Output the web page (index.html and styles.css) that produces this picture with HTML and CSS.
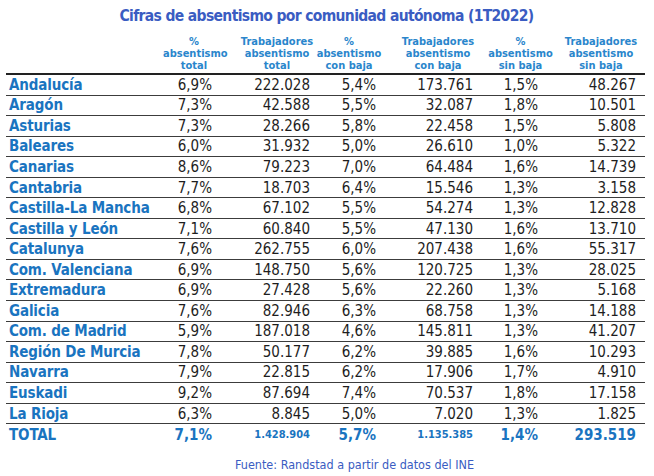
FILE: index.html
```html
<!DOCTYPE html>
<html lang="es">
<head>
<meta charset="utf-8">
<link rel="stylesheet" href="styles.css">
</head>
<body>
<div class="page">
  <h1 class="title">Cifras de absentismo por comunidad autónoma (1T2022)</h1>
  <div class="table">
    <div class="row head">
      <div class="cell lab"></div>
      <div class="cell c1">%<br>absentismo<br>total</div>
      <div class="cell c2">Trabajadores<br>absentismo<br>total</div>
      <div class="cell c3">%<br>absentismo<br>con baja</div>
      <div class="cell c4">Trabajadores<br>absentismo<br>con baja</div>
      <div class="cell c5">%<br>absentismo<br>sin baja</div>
      <div class="cell c6">Trabajadores<br>absentismo<br>sin baja</div>
    </div>
    <div class="row"><div class="cell lab">Andalucía</div><div class="cell c1">6,9%</div><div class="cell c2">222.028</div><div class="cell c3">5,4%</div><div class="cell c4">173.761</div><div class="cell c5">1,5%</div><div class="cell c6">48.267</div></div>
    <div class="row"><div class="cell lab">Aragón</div><div class="cell c1">7,3%</div><div class="cell c2">42.588</div><div class="cell c3">5,5%</div><div class="cell c4">32.087</div><div class="cell c5">1,8%</div><div class="cell c6">10.501</div></div>
    <div class="row"><div class="cell lab">Asturias</div><div class="cell c1">7,3%</div><div class="cell c2">28.266</div><div class="cell c3">5,8%</div><div class="cell c4">22.458</div><div class="cell c5">1,5%</div><div class="cell c6">5.808</div></div>
    <div class="row"><div class="cell lab">Baleares</div><div class="cell c1">6,0%</div><div class="cell c2">31.932</div><div class="cell c3">5,0%</div><div class="cell c4">26.610</div><div class="cell c5">1,0%</div><div class="cell c6">5.322</div></div>
    <div class="row"><div class="cell lab">Canarias</div><div class="cell c1">8,6%</div><div class="cell c2">79.223</div><div class="cell c3">7,0%</div><div class="cell c4">64.484</div><div class="cell c5">1,6%</div><div class="cell c6">14.739</div></div>
    <div class="row"><div class="cell lab">Cantabria</div><div class="cell c1">7,7%</div><div class="cell c2">18.703</div><div class="cell c3">6,4%</div><div class="cell c4">15.546</div><div class="cell c5">1,3%</div><div class="cell c6">3.158</div></div>
    <div class="row"><div class="cell lab">Castilla-La Mancha</div><div class="cell c1">6,8%</div><div class="cell c2">67.102</div><div class="cell c3">5,5%</div><div class="cell c4">54.274</div><div class="cell c5">1,3%</div><div class="cell c6">12.828</div></div>
    <div class="row"><div class="cell lab">Castilla y León</div><div class="cell c1">7,1%</div><div class="cell c2">60.840</div><div class="cell c3">5,5%</div><div class="cell c4">47.130</div><div class="cell c5">1,6%</div><div class="cell c6">13.710</div></div>
    <div class="row"><div class="cell lab">Catalunya</div><div class="cell c1">7,6%</div><div class="cell c2">262.755</div><div class="cell c3">6,0%</div><div class="cell c4">207.438</div><div class="cell c5">1,6%</div><div class="cell c6">55.317</div></div>
    <div class="row"><div class="cell lab">Com. Valenciana</div><div class="cell c1">6,9%</div><div class="cell c2">148.750</div><div class="cell c3">5,6%</div><div class="cell c4">120.725</div><div class="cell c5">1,3%</div><div class="cell c6">28.025</div></div>
    <div class="row"><div class="cell lab">Extremadura</div><div class="cell c1">6,9%</div><div class="cell c2">27.428</div><div class="cell c3">5,6%</div><div class="cell c4">22.260</div><div class="cell c5">1,3%</div><div class="cell c6">5.168</div></div>
    <div class="row"><div class="cell lab">Galicia</div><div class="cell c1">7,6%</div><div class="cell c2">82.946</div><div class="cell c3">6,3%</div><div class="cell c4">68.758</div><div class="cell c5">1,3%</div><div class="cell c6">14.188</div></div>
    <div class="row"><div class="cell lab">Com. de Madrid</div><div class="cell c1">5,9%</div><div class="cell c2">187.018</div><div class="cell c3">4,6%</div><div class="cell c4">145.811</div><div class="cell c5">1,3%</div><div class="cell c6">41.207</div></div>
    <div class="row"><div class="cell lab">Región De Murcia</div><div class="cell c1">7,8%</div><div class="cell c2">50.177</div><div class="cell c3">6,2%</div><div class="cell c4">39.885</div><div class="cell c5">1,6%</div><div class="cell c6">10.293</div></div>
    <div class="row"><div class="cell lab">Navarra</div><div class="cell c1">7,9%</div><div class="cell c2">22.815</div><div class="cell c3">6,2%</div><div class="cell c4">17.906</div><div class="cell c5">1,7%</div><div class="cell c6">4.910</div></div>
    <div class="row"><div class="cell lab">Euskadi</div><div class="cell c1">9,2%</div><div class="cell c2">87.694</div><div class="cell c3">7,4%</div><div class="cell c4">70.537</div><div class="cell c5">1,8%</div><div class="cell c6">17.158</div></div>
    <div class="row"><div class="cell lab">La Rioja</div><div class="cell c1">6,3%</div><div class="cell c2">8.845</div><div class="cell c3">5,0%</div><div class="cell c4">7.020</div><div class="cell c5">1,3%</div><div class="cell c6">1.825</div></div>
    <div class="row total"><div class="cell lab">TOTAL</div><div class="cell c1">7,1%</div><div class="cell c2 small">1.428.904</div><div class="cell c3">5,7%</div><div class="cell c4 small">1.135.385</div><div class="cell c5">1,4%</div><div class="cell c6">293.519</div></div>
  </div>
  <p class="source">Fuente: Randstad a partir de datos del INE</p>
</div>
</body>
</html>
```
FILE: styles.css
```css
* { box-sizing: border-box; }
html, body { margin: 0; padding: 0; background: #fff; }
body { font-family: "DejaVu Sans Condensed", "DejaVu Sans", sans-serif; color: #1e1e1e; }
.page { width: 654px; height: 476px; padding: 5px 9px 0 6px; }
.title {
  margin: 0;
  height: 26px;
  font-size: 15.5px;
  letter-spacing: -0.65px;
  font-weight: bold;
  color: #3a5cc2;
  text-align: center;
  padding-left: 2px;
  line-height: 22px;
}
.table { display: flex; flex-direction: column; }
.row {
  display: grid;
  grid-template-columns: 157px 72px 80px 79px 86px 81px 84px;
  height: 20.55px;
  align-items: center;
  border-bottom: 1px solid #3c3c3c;
  font-size: 15px;
}
.row.head {
  height: 44px;
  border-bottom: 2px solid #222;
  font-size: 11px;
  font-weight: bold;
  color: #2a86cc;
  line-height: 12px;
  align-items: end;
  padding-bottom: 1px;
}
.head .cell { text-align: center; }
.cell { text-align: right; white-space: nowrap; }
.cell.lab { text-align: left; font-weight: bold; color: #1a74c0; padding-left: 3px; letter-spacing: -0.15px; }
.c1 { padding-right: 23px; }
.c2 { padding-right: 5px; }
.c3 { padding-right: 18px; }
.c4 { padding-right: 7px; }
.c5 { padding-right: 23px; }
.c6 { padding-right: 9px; }
.head .c1 { padding: 0 10px 0 0; }
.head .c2 { padding: 0 0 0 4px; }
.head .c3 { padding: 0 11px 0 0; }
.head .c4 { padding: 0 0 0 2px; }
.head .c5 { padding: 0; }
.head .c6 { padding: 0 4px 0 0; }
.row.total { border-bottom: none; font-weight: bold; color: #1a74c0; }
.total .small { font-size: 11px; }
.source {
  margin: 12px 0 0;
  text-align: center;
  font-size: 12.5px;
  color: #3a5cc2;
  padding-left: 58px;
}
```
